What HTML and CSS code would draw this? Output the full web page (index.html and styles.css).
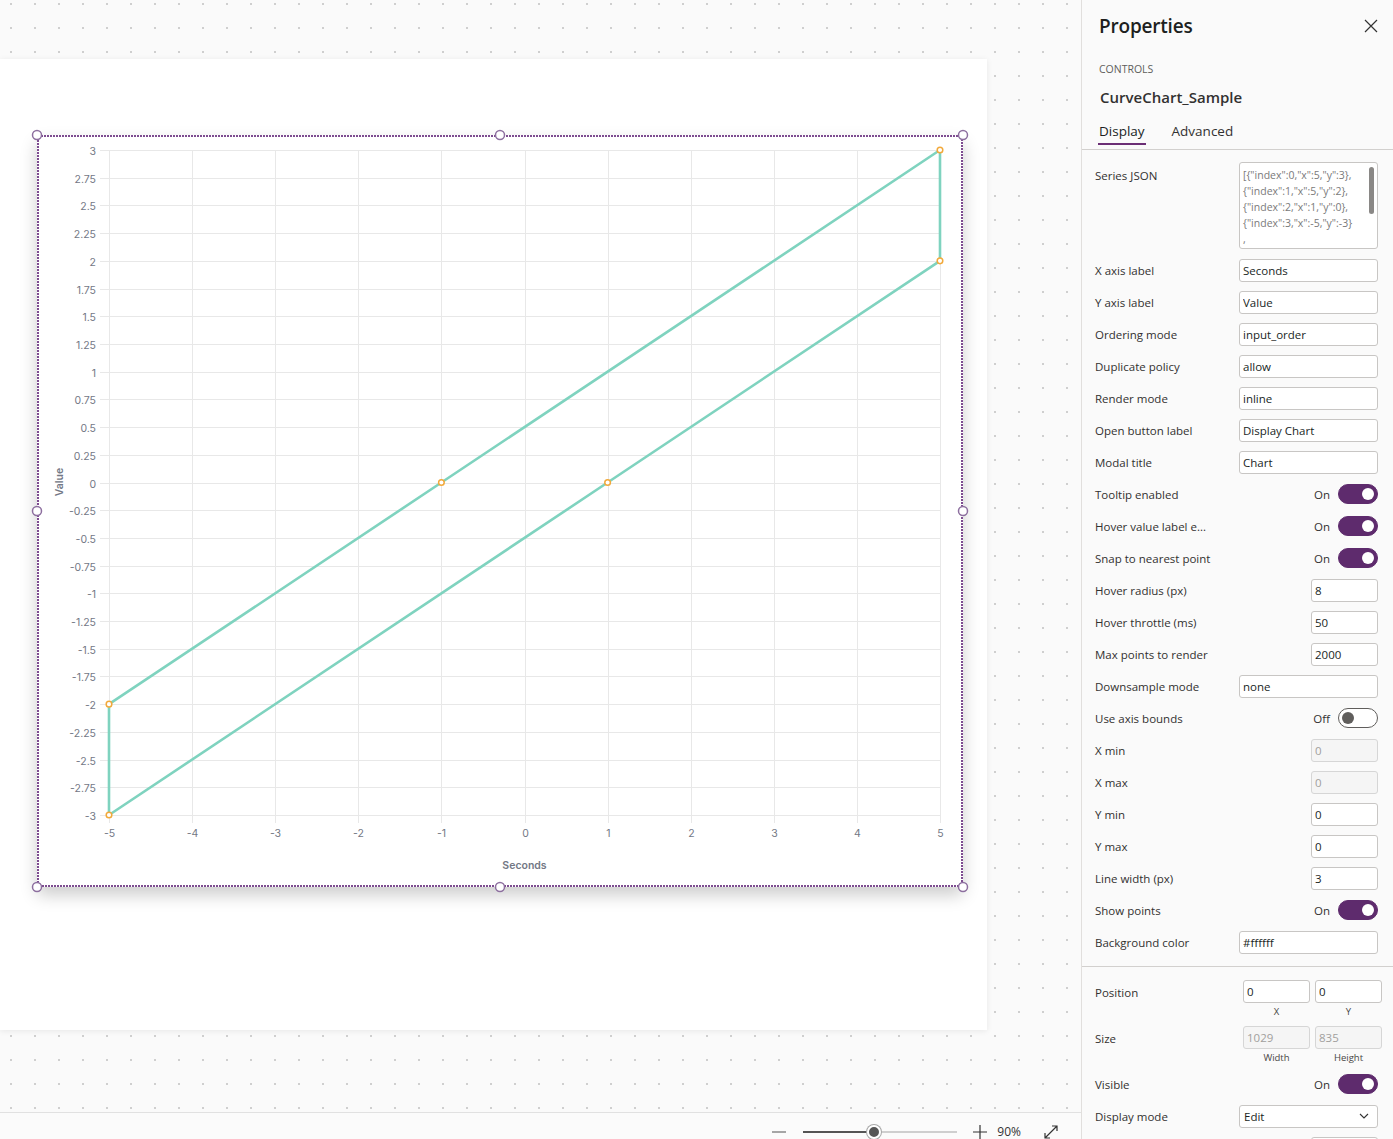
FILE: index.html
```html
<!DOCTYPE html>
<html lang="en">
<head>
  <meta charset="UTF-8">
  <meta name="viewport" content="width=device-width, initial-scale=1.0">
  <title>CurveChart_Sample - Properties</title>
  <link rel="stylesheet" href="styles.css">
</head>
<body>
  <div class="app">
    <div class="workspace">
      <div class="canvas">
        <div class="paper">
          <div class="chart-control">
            <svg id="chart" class="chart" width="926" height="752" viewBox="0 0 926 752"></svg>
          </div>
        </div>
      </div>
      <div class="zoom-bar">
        <span class="zoom-minus"></span>
        <div class="zoom-slider">
          <span class="zoom-fill"></span>
          <span class="zoom-knob"></span>
        </div>
        <svg class="zoom-plus" width="14" height="14" viewBox="0 0 14 14"><path d="M7 0V14M0 7H14" /></svg>
        <span class="zoom-value">90%</span>
        <svg class="zoom-expand" width="16" height="16" viewBox="0 0 16 16"><path d="M2 14L14 2M9 2H14V7M2 9V14H7" /></svg>
      </div>
    </div>

    <aside class="panel">
      <div class="panel-header">
        <h1 class="panel-title">Properties</h1>
        <svg class="close-icon" width="14" height="14" viewBox="0 0 14 14"><path d="M1 1L13 13M13 1L1 13" /></svg>
      </div>
      <div class="panel-meta">
        <div class="meta-kind">CONTROLS</div>
        <div class="meta-name">CurveChart_Sample</div>
      </div>
      <div class="tabs">
        <a href="#" class="tab active">Display</a>
        <a href="#" class="tab">Advanced</a>
      </div>

      <div class="prop-list">
        <div class="prop-row prop-row-tall">
          <label>Series JSON</label>
          <div class="json-box">
            <div>[{"index":0,"x":5,"y":3},</div>
            <div>{"index":1,"x":5,"y":2},</div>
            <div>{"index":2,"x":1,"y":0},</div>
            <div>{"index":3,"x":-5,"y":-3}</div>
            <div>,</div>
            <span class="scroll-thumb"></span>
          </div>
        </div>
        <div class="prop-row"><label>X axis label</label><input class="field" value="Seconds"></div>
        <div class="prop-row"><label>Y axis label</label><input class="field" value="Value"></div>
        <div class="prop-row"><label>Ordering mode</label><input class="field" value="input_order"></div>
        <div class="prop-row"><label>Duplicate policy</label><input class="field" value="allow"></div>
        <div class="prop-row"><label>Render mode</label><input class="field" value="inline"></div>
        <div class="prop-row"><label>Open button label</label><input class="field" value="Display Chart"></div>
        <div class="prop-row"><label>Modal title</label><input class="field" value="Chart"></div>
        <div class="prop-row"><label>Tooltip enabled</label><div class="switch"><span>On</span><span class="toggle on"></span></div></div>
        <div class="prop-row"><label>Hover value label e...</label><div class="switch"><span>On</span><span class="toggle on"></span></div></div>
        <div class="prop-row"><label>Snap to nearest point</label><div class="switch"><span>On</span><span class="toggle on"></span></div></div>
        <div class="prop-row"><label>Hover radius (px)</label><input class="field field-sm" value="8"></div>
        <div class="prop-row"><label>Hover throttle (ms)</label><input class="field field-sm" value="50"></div>
        <div class="prop-row"><label>Max points to render</label><input class="field field-sm" value="2000"></div>
        <div class="prop-row"><label>Downsample mode</label><input class="field" value="none"></div>
        <div class="prop-row"><label>Use axis bounds</label><div class="switch"><span>Off</span><span class="toggle"></span></div></div>
        <div class="prop-row"><label>X min</label><input class="field field-sm" value="0" disabled></div>
        <div class="prop-row"><label>X max</label><input class="field field-sm" value="0" disabled></div>
        <div class="prop-row"><label>Y min</label><input class="field field-sm" value="0"></div>
        <div class="prop-row"><label>Y max</label><input class="field field-sm" value="0"></div>
        <div class="prop-row"><label>Line width (px)</label><input class="field field-sm" value="3"></div>
        <div class="prop-row"><label>Show points</label><div class="switch"><span>On</span><span class="toggle on"></span></div></div>
        <div class="prop-row"><label>Background color</label><input class="field" value="#ffffff"></div>
      </div>

      <div class="prop-list prop-list-layout">
        <div class="prop-group">
          <label>Position</label>
          <div class="pair">
            <div class="pair-item"><input class="field field-sm" value="0"><span>X</span></div>
            <div class="pair-item"><input class="field field-sm" value="0"><span>Y</span></div>
          </div>
        </div>
        <div class="prop-group">
          <label>Size</label>
          <div class="pair">
            <div class="pair-item"><input class="field field-sm" value="1029" disabled><span>Width</span></div>
            <div class="pair-item"><input class="field field-sm" value="835" disabled><span>Height</span></div>
          </div>
        </div>
        <div class="prop-row"><label>Visible</label><div class="switch"><span>On</span><span class="toggle on"></span></div></div>
        <div class="prop-row">
          <label>Display mode</label>
          <div class="select">Edit<svg width="10" height="6" viewBox="0 0 10 6"><path d="M1 1L5 5L9 1" /></svg></div>
        </div>
        <div class="prop-row prop-row-end"><input class="field field-sm" aria-label="Tab index" value=""></div>
      </div>
    </aside>
  </div>

  <script>
    (function () {
      var NS = 'http://www.w3.org/2000/svg';
      var svg = document.getElementById('chart');
      var plot = { left: 72, right: 903, top: 15, bottom: 680 };
      var series = [[5, 3], [5, 2], [1, 0], [-5, -3], [-5, -2], [-1, 0], [5, 3]];

      function sx(v) { return plot.left + (v + 5) * (plot.right - plot.left) / 10; }
      function sy(v) { return plot.top + (3 - v) * (plot.bottom - plot.top) / 6; }
      function el(tag, attrs, text) {
        var node = document.createElementNS(NS, tag);
        for (var k in attrs) node.setAttribute(k, attrs[k]);
        if (text != null) node.textContent = text;
        svg.appendChild(node);
        return node;
      }

      // horizontal grid + y ticks
      for (var i = 0; i <= 24; i++) {
        var v = 3 - i * 0.25;
        var y = Math.round(sy(v)) + 0.5;
        el('line', { x1: plot.left - 9, x2: plot.right, y1: y, y2: y, 'class': 'grid' });
        el('text', { x: plot.left - 13, y: y + 4, 'class': 'tick tick-y' }, String(v));
      }
      // vertical grid + x ticks
      for (var j = -5; j <= 5; j++) {
        var x = Math.round(sx(j)) + 0.5;
        el('line', { x1: x, x2: x, y1: plot.top, y2: plot.bottom + 8, 'class': 'grid' });
        el('text', { x: x, y: plot.bottom + 22, 'class': 'tick tick-x' }, String(j));
      }

      el('text', { x: (plot.left + plot.right) / 2, y: 734, 'class': 'axis-title' }, 'Seconds');
      el('text', { transform: 'translate(26 347) rotate(-90)', 'class': 'axis-title' }, 'Value');

      var pts = series.map(function (p) { return sx(p[0]) + ',' + sy(p[1]); }).join(' ');
      el('polyline', { points: pts, 'class': 'series' });
      series.slice(0, -1).forEach(function (p) {
        el('circle', { cx: sx(p[0]), cy: sy(p[1]), r: 2.8, 'class': 'point' });
      });

      // selection frame + resize handles
      el('rect', { x: 1, y: 1, width: 924, height: 750, 'class': 'frame' });
      [[0, 0], [463, 0], [926, 0], [0, 376], [926, 376], [0, 752], [463, 752], [926, 752]].forEach(function (h) {
        el('circle', { cx: h[0], cy: h[1], r: 4.5, 'class': 'handle' });
      });
    })();
  </script>
</body>
</html>
```

FILE: styles.css
```css
* {
  margin: 0;
  padding: 0;
  box-sizing: border-box;
}
body {
  font-family: "Segoe UI", "Open Sans", "Noto Sans", sans-serif;
  color: #323130;
  background: #fafafa;
  overflow: hidden;
}
.app {
  display: flex;
  height: 1139px;
  overflow: hidden;
}

/* canvas */
.workspace {
  width: 1081px;
  flex-shrink: 0;
  display: flex;
  flex-direction: column;
  overflow: hidden;
}
.canvas {
  height: 1112px;
  flex-shrink: 0;
  padding-top: 59px;
  overflow: hidden;
  background-color: #fafafa;
  background-image: radial-gradient(circle, #cfcfcf 1px, transparent 1.4px);
  background-size: 24px 24px;
  background-position: -1px -8px;
}
.paper {
  width: 987px;
  height: 971px;
  background: #fff;
  box-shadow: 0 1px 6px rgba(0, 0, 0, 0.08);
  padding: 76px 0 0 37px;
}
.chart-control {
  width: 926px;
  height: 752px;
  background: #fff;
  box-shadow: 0 8px 16px rgba(0, 0, 0, 0.2);
}
.chart {
  display: block;
  overflow: visible;
}
.grid {
  stroke: #e8e8e8;
  stroke-width: 1;
}
.tick {
  font-family: Inter, "Liberation Sans", sans-serif;
  font-size: 10.5px;
  fill: #737885;
}
.tick-y {
  text-anchor: end;
}
.tick-x {
  text-anchor: middle;
}
.axis-title {
  font-family: Inter, "Liberation Sans", sans-serif;
  font-size: 10.5px;
  font-weight: 600;
  fill: #737885;
  text-anchor: middle;
}
.series {
  fill: none;
  stroke: #7fd3bf;
  stroke-width: 2.6;
  stroke-linejoin: round;
}
.point {
  fill: #fff;
  stroke: #f2a93b;
  stroke-width: 1.5;
}
.frame {
  fill: none;
  stroke: #7d4c90;
  stroke-width: 2;
  stroke-dasharray: 2 1;
}
.handle {
  fill: #fff;
  stroke: #8d6f9f;
  stroke-width: 1.5;
}

/* zoom bar */
.zoom-bar {
  height: 38px;
  flex-shrink: 0;
  border-top: 1px solid #e1e1e1;
  background: #fbfbfb;
  display: flex;
  align-items: center;
  justify-content: flex-end;
  padding-right: 22px;
}
.zoom-minus {
  width: 14px;
  height: 2px;
  background: #a6a6a6;
  margin-right: 17px;
}
.zoom-slider {
  position: relative;
  width: 154px;
  height: 2px;
  background: #cfcfcf;
  margin-right: 16px;
}
.zoom-fill {
  display: block;
  width: 71px;
  height: 2px;
  background: #555;
}
.zoom-knob {
  position: absolute;
  left: 64px;
  top: -6px;
  width: 14px;
  height: 14px;
  border-radius: 50%;
  background: #555;
  border: 2px solid #fff;
  box-shadow: 0 0 0 1px #a8a8a8;
}
.zoom-plus path,
.zoom-expand path {
  fill: none;
  stroke: #333;
  stroke-width: 1.2;
}
.zoom-value {
  font-size: 12px;
  line-height: 14px;
  color: #333;
  margin: 0 22px 0 10px;
}

/* properties panel */
.panel {
  width: 312px;
  flex-shrink: 0;
  border-left: 1px solid #e1dfdd;
  background: #fafafa;
  overflow: hidden;
}
.panel-header {
  height: 52px;
  display: flex;
  align-items: center;
  justify-content: space-between;
  padding: 0 15px 0 17px;
}
.panel-title {
  font-size: 19px;
  font-weight: 600;
  color: #201f1e;
  letter-spacing: -0.2px;
}
.close-icon path {
  fill: none;
  stroke: #333;
  stroke-width: 1.2;
}
.panel-meta {
  padding: 9px 17px 0 17px;
}
.meta-kind {
  font-size: 10.5px;
  line-height: 16px;
  color: #605e5c;
}
.meta-name {
  margin-top: 9px;
  padding-left: 1px;
  font-size: 15px;
  line-height: 22px;
  font-weight: 600;
  color: #323130;
}
.tabs {
  display: flex;
  gap: 25px;
  margin-top: 13px;
  padding: 0 16px 4px 16px;
  border-bottom: 1px solid #d2d0ce;
}
.tab {
  font-size: 13.5px;
  line-height: 20px;
  color: #323130;
  text-decoration: none;
  padding: 0 1px 2px 1px;
  border-bottom: 2px solid transparent;
}
.tab.active {
  border-bottom-color: #6b2e75;
  color: #201f1e;
}
.prop-list {
  padding: 8px 15px 8px 13px;
}
.prop-list-layout {
  border-top: 1px solid #d2d0ce;
  padding-top: 13px;
}
.prop-row {
  height: 32px;
  display: flex;
  align-items: center;
  justify-content: space-between;
}
.prop-row-end {
  justify-content: flex-end;
}
.prop-row label,
.prop-group label {
  font-size: 11.5px;
  line-height: 16px;
  color: #323130;
}
.prop-row label {
  padding-top: 2px;
}
.prop-row-tall {
  height: 96px;
  align-items: flex-start;
}
.prop-row-tall label {
  padding-top: 10px;
}
.json-box {
  position: relative;
  width: 139px;
  height: 87px;
  margin-top: 4px;
  background: #fff;
  border: 1px solid #c8c6c4;
  border-radius: 3px;
  padding: 4px 0 0 3px;
  font-size: 10.5px;
  line-height: 16px;
  color: #7a7a7a;
  white-space: nowrap;
  overflow: hidden;
}
.scroll-thumb {
  position: absolute;
  right: 3px;
  top: 4px;
  width: 5px;
  height: 47px;
  border-radius: 3px;
  background: #8a8886;
}
.field {
  width: 139px;
  height: 23px;
  border: 1px solid #c8c6c4;
  border-radius: 3px;
  background: #fff;
  padding: 0 3px;
  font-family: inherit;
  font-size: 11.5px;
  color: #201f1e;
  outline: none;
}
.field-sm {
  width: 67px;
}
.field:disabled {
  background: #f5f5f5;
  border-color: #d6d6d6;
  color: #a19f9d;
}
.switch {
  display: flex;
  align-items: center;
  gap: 8px;
  font-size: 11.5px;
  color: #323130;
}
.toggle {
  position: relative;
  width: 40px;
  height: 20px;
  border-radius: 10px;
  border: 1px solid #605e5c;
  background: #fff;
}
.toggle::after {
  content: '';
  position: absolute;
  top: 3px;
  left: 3px;
  width: 12px;
  height: 12px;
  border-radius: 50%;
  background: #605e5c;
}
.toggle.on {
  background: #5e2b6d;
  border-color: #5e2b6d;
}
.toggle.on::after {
  left: auto;
  right: 3px;
  background: #fff;
}
.prop-group {
  display: flex;
  justify-content: space-between;
  align-items: flex-start;
  margin-bottom: 7px;
}
.prop-group + .prop-row {
  margin-top: -4px;
}
.prop-group label {
  line-height: 23px;
  padding-top: 1px;
}
.pair {
  display: flex;
  gap: 5px;
  margin-right: -4px;
}
.pair-item {
  display: flex;
  flex-direction: column;
  align-items: center;
}
.pair-item span {
  margin-top: 2px;
  font-size: 9.5px;
  line-height: 14px;
  color: #484644;
}
.select {
  width: 139px;
  height: 23px;
  border: 1px solid #c8c6c4;
  border-radius: 3px;
  background: #fff;
  padding: 0 8px 0 4px;
  display: flex;
  align-items: center;
  justify-content: space-between;
  font-size: 11.5px;
  color: #201f1e;
}
.select path {
  fill: none;
  stroke: #333;
  stroke-width: 1.1;
}
```
